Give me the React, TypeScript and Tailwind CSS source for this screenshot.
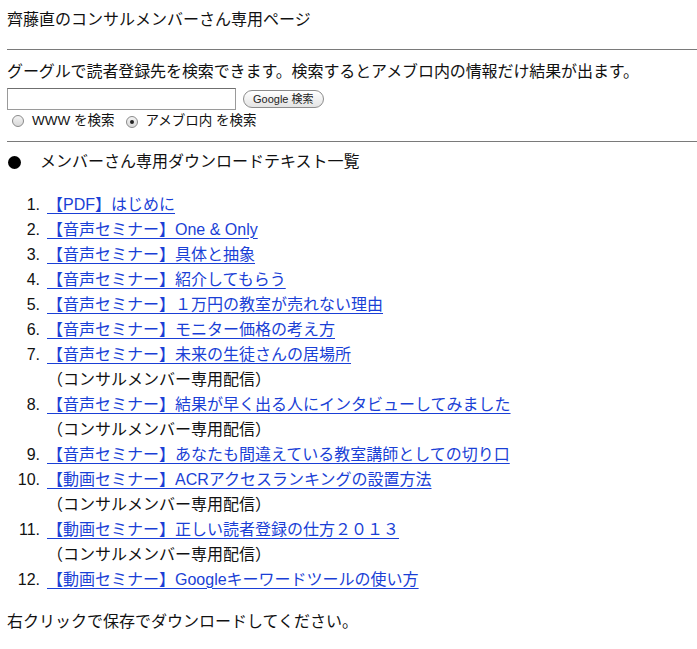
import React from "react";

const items: { t: string; sub?: boolean }[] = [
  { t: "【PDF】はじめに" },
  { t: "【音声セミナー】One & Only" },
  { t: "【音声セミナー】具体と抽象" },
  { t: "【音声セミナー】紹介してもらう" },
  { t: "【音声セミナー】１万円の教室が売れない理由" },
  { t: "【音声セミナー】モニター価格の考え方" },
  { t: "【音声セミナー】未来の生徒さんの居場所", sub: true },
  { t: "【音声セミナー】結果が早く出る人にインタビューしてみました", sub: true },
  { t: "【音声セミナー】あなたも間違えている教室講師としての切り口" },
  { t: "【動画セミナー】ACRアクセスランキングの設置方法", sub: true },
  { t: "【動画セミナー】正しい読者登録の仕方２０１３", sub: true },
  { t: "【動画セミナー】Googleキーワードツールの使い方" },
];

const font = '"Liberation Sans","Noto Sans CJK JP",sans-serif';

function Radio({ checked }: { checked?: boolean }) {
  return (
    <span className="inline-flex items-center justify-center w-[12px] h-[12px] rounded-full border border-[#8a8a8a] bg-gradient-to-b from-[#f4f4f4] to-[#d8d8d8]">
      {checked && <span className="w-[4px] h-[4px] rounded-full bg-[#222]" />}
    </span>
  );
}

export default function App() {
  return (
    <div className="bg-white text-[#111] w-[697px] min-h-[649px] overflow-hidden" style={{ fontFamily: font }}>
      <div className="pl-[7px] pt-[8px] h-[32px] leading-[24px] text-[16px]">齊藤直のコンサルメンバーさん専用ページ</div>
      <div className="ml-[7px] mt-[17px] border-t border-[#7a7a7a]" />
      <div className="pl-[7px] mt-[10px] h-[24px] leading-[24px] text-[16px] tracking-[-0.1px]">
        グーグルで読者登録先を検索できます。検索するとアメブロ内の情報だけ結果が出ます。
      </div>
      <div className="pl-[7px] mt-[4px] flex items-center h-[22px] gap-[7px]">
        <div className="w-[229px] h-[22px] border border-[#9a9a9a] border-t-[#6f6f6f] bg-white" />
        <div className="h-[18px] px-[9px] rounded-full border border-[#8c8c8c] bg-gradient-to-b from-white to-[#e4e4e4] flex items-center text-[11px] leading-none text-[#222]">
          Google 検索
        </div>
      </div>
      <div className="flex items-center h-[21px] pl-[12px] text-[13.5px] leading-none">
        <Radio />
        <span className="ml-[8px]">WWW を検索</span>
        <span className="ml-[12px]">
          <Radio checked />
        </span>
        <span className="ml-[7px]">アメブロ内 を検索</span>
      </div>
      <div className="ml-[7px] mt-[10px] border-t border-[#7a7a7a]" />
      <div className="pl-[7px] mt-[8px] h-[24px] flex items-center text-[16px]">
        <span className="w-[13px] h-[13px] rounded-full bg-black ml-[1px]" />
        <span className="ml-[19px]">メンバーさん専用ダウンロードテキスト一覧</span>
      </div>
      <div className="mt-[18px] pl-[7px] flex flex-col">
        {items.map((it, i) => (
          <React.Fragment key={i}>
            <div className="flex h-[25px] items-center text-[16px]">
              <span className="w-[33px] text-right">{i + 1}.</span>
              <a href="#" className="ml-[7px] text-[#1a3fd6] underline underline-offset-[3px] decoration-[1px]">
                {it.t}
              </a>
            </div>
            {it.sub && (
              <div className="flex h-[25px] items-center text-[16px]">
                <span className="ml-[40px]">（コンサルメンバー専用配信）</span>
              </div>
            )}
          </React.Fragment>
        ))}
      </div>
      <div className="pl-[7px] mt-[17px] h-[25px] flex items-center text-[16px]">
        右クリックで保存でダウンロードしてください。
      </div>
    </div>
  );
}
